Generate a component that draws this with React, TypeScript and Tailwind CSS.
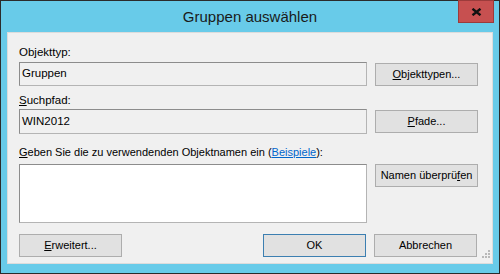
import React from "react";

const font = { fontFamily: '"Segoe UI", "Liberation Sans", Arial, sans-serif' };

function Btn({ children, primary }: { children: React.ReactNode; primary?: boolean }) {
  return (
    <div
      className={`flex h-[23px] w-[103px] items-center justify-center border bg-[#e1e1e1] text-[11px] text-black ${
        primary ? "border-[#3c7fb1]" : "border-[#adadad]"
      }`}
    >
      {children}
    </div>
  );
}

function Field({ children, h = "h-[24px]", white }: { children?: React.ReactNode; h?: string; white?: boolean }) {
  return (
    <div
      className={`flex w-[348px] ${h} ${white ? "items-start bg-white" : "items-center bg-[#f0f0f0]"} border border-[#b4b4b4] border-t-[#8c8c8c] border-l-[#8c8c8c] px-[2px] text-[11.5px] text-black`}
    >
      {children}
    </div>
  );
}

export default function App() {
  return (
    <div
      style={font}
      className="flex h-[274px] w-[500px] flex-col border border-[#2b2b2b] bg-[#68cbe9]"
    >
      <div className="relative flex h-[31px] items-center justify-center">
        <span className="mt-[2px] text-[15px] text-[#1a1a1a]">Gruppen auswählen</span>
        <div className="absolute right-[5px] top-[-1px] flex h-[23px] w-[36px] items-center justify-center border border-[#9c3b3b] bg-[#c75050]">
          <svg width="11" height="8" viewBox="0 0 11 8">
            <path d="M1.5 0.8 L9.5 7.2 M9.5 0.8 L1.5 7.2" stroke="#111" strokeWidth="2.4" />
          </svg>
        </div>
      </div>
      <div className="mx-[6px] flex flex-1 flex-col border border-[#dcdcdc] bg-[#f0f0f0] pl-[11px] pt-[11px]">
        <div className="h-[16px] text-[11.5px] leading-[16px] text-black">Objekttyp:</div>
        <div className="mt-[2px] flex items-center gap-[8px]">
          <Field>Gruppen</Field>
          <Btn>
            <span>
              <span className="underline">O</span>bjekttypen...
            </span>
          </Btn>
        </div>
        <div className="mt-[6px] h-[16px] text-[11.5px] leading-[16px] text-black">
          <span className="underline">S</span>uchpfad:
        </div>
        <div className="mt-[1px] flex items-center gap-[8px]">
          <Field h="h-[25px]">WIN2012</Field>
          <Btn>
            <span>
              <span className="underline">P</span>fade...
            </span>
          </Btn>
        </div>
        <div className="mt-[10px] h-[16px] text-[11px] leading-[16px] text-black">
          <span className="underline">G</span>eben Sie die zu verwendenden Objektnamen ein (
          <span className="text-[#0066cc] underline">Beispiele</span>):
        </div>
        <div className="mt-[4px] flex items-start gap-[8px]">
          <Field h="h-[59px]" white />
          <Btn>
            <span>
              Namen überprü<span className="underline">f</span>en
            </span>
          </Btn>
        </div>
        <div className="mt-[9px] flex items-center">
          <Btn>
            <span>
              <span className="underline">E</span>rweitert...
            </span>
          </Btn>
          <div className="ml-[141px] flex gap-[8px]">
            <Btn primary>OK</Btn>
            <Btn>Abbrechen</Btn>
          </div>
          <div className="ml-auto mr-[2px] mt-[18px]">
            <svg width="8" height="8" viewBox="0 0 8 8">
              <rect x="6" y="0" width="2" height="2" fill="#b8b8b8" />
              <rect x="3" y="3" width="2" height="2" fill="#b8b8b8" />
              <rect x="6" y="3" width="2" height="2" fill="#b8b8b8" />
              <rect x="0" y="6" width="2" height="2" fill="#b8b8b8" />
              <rect x="3" y="6" width="2" height="2" fill="#b8b8b8" />
              <rect x="6" y="6" width="2" height="2" fill="#b8b8b8" />
            </svg>
          </div>
        </div>
      </div>
      <div className="h-[9px]" />
    </div>
  );
}
